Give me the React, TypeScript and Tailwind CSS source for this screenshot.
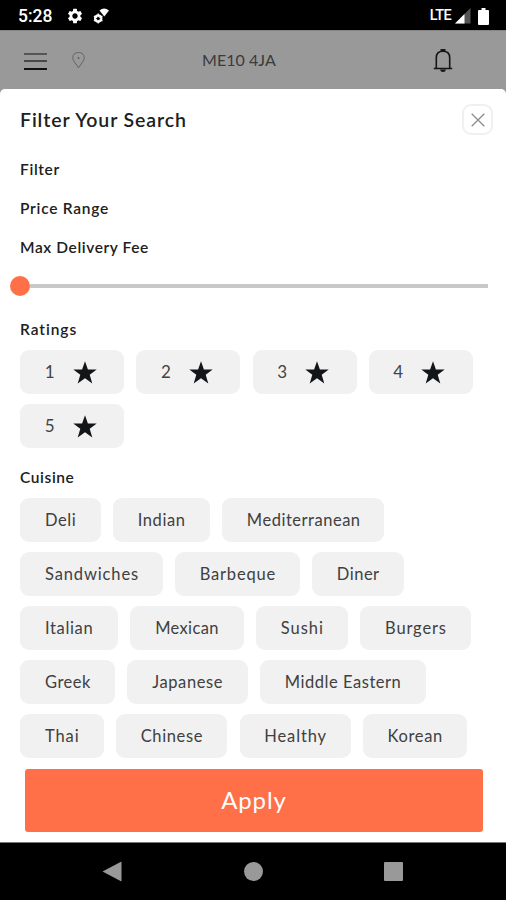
import { MdSettings } from "react-icons/md";

type Chip = { label: string; box: string };

const ratings = [1, 2, 3, 4, 5];

const cuisineRows: Chip[][] = [
  [
    { label: "Deli", box: "w-[80.5px] tracking-[0.6px]" },
    { label: "Indian", box: "w-[97px] tracking-[0.6px]" },
    { label: "Mediterranean", box: "w-[162px] tracking-[0.52px]" },
  ],
  [
    { label: "Sandwiches", box: "w-[142.5px] tracking-[0.87px]" },
    { label: "Barbeque", box: "w-[125px] tracking-[0.82px]" },
    { label: "Diner", box: "w-[91.5px] tracking-[0.5px]" },
  ],
  [
    { label: "Italian", box: "w-[98px] tracking-[0.65px]" },
    { label: "Mexican", box: "w-[113.5px] tracking-[0.35px]" },
    { label: "Sushi", box: "w-[92px] tracking-[0.95px]" },
    { label: "Burgers", box: "w-[111px] tracking-[0.85px]" },
  ],
  [
    { label: "Greek", box: "w-[95px] tracking-[0.5px]" },
    { label: "Japanese", box: "w-[120.5px] tracking-[0.62px]" },
    { label: "Middle Eastern", box: "w-[165.5px] tracking-[0.53px]" },
  ],
  [
    { label: "Thai", box: "w-[83.5px] tracking-[0.9px]" },
    { label: "Chinese", box: "w-[111.5px] tracking-[0.62px]" },
    { label: "Healthy", box: "w-[111px] tracking-[0.85px]" },
    { label: "Korean", box: "w-[104px] tracking-[0.65px]" },
  ],
];

function StatusBar() {
  return (
    <div className="flex h-[30px] items-center bg-black pt-[2px] pr-[16px] pl-[18px] text-white">
      <span className="w-[48px] font-[Roboto,sans-serif] text-[17.5px] leading-5 font-medium">5:28</span>
      <MdSettings className="size-[18px]" />
      <svg className="ml-[9px] h-[18px] w-[18px]" viewBox="0 0 18 18" fill="none">
        <circle cx="5.2" cy="11.5" r="3.2" stroke="white" strokeWidth="2.2" />
        <path d="M5.2 6.5v10M.9 9l8.6 5M9.5 9l-8.6 5" stroke="white" strokeWidth="1.3" />
        <circle cx="5.2" cy="11.5" r="1.6" fill="black" />
        <path d="M6.5 3.5q4.5-4 9.5 0l-4.7 6Z" fill="white" />
      </svg>
      <span className="ml-auto font-[Roboto,sans-serif] text-[14.5px] leading-5 font-medium tracking-[-0.6px]">LTE</span>
      <svg className="ml-[4px] h-[16px] w-[16px]" viewBox="0 0 16 16">
        <path d="M0 15.5 15.5 0v15.5Z" fill="#555" />
        <path d="M0 15.5 9.5 6v9.5Z" fill="white" />
      </svg>
      <svg className="mr-[1px] ml-[7px] h-[17px] w-[11px]" viewBox="0 0 11 18" preserveAspectRatio="none">
        <path d="M3.5 0h4v2H10q1 0 1 1v14q0 1-1 1H1q-1 0-1-1V3q0-1 1-1h2.5Z" fill="white" />
      </svg>
    </div>
  );
}

function AppHeader() {
  return (
    <header className="grid h-[59px] grid-cols-[23px_76px_1fr_62px] items-center border-t border-[#858585] bg-[#999] pl-[24px]">
      <div className="flex flex-col gap-[5.5px] pt-[2px]">
        <span className="h-[2px] bg-[#555]" />
        <span className="h-[2px] bg-[#484848]" />
        <span className="h-[2px] bg-[#111]" />
      </div>
      <svg className="ml-[25px] h-[17px] w-[13px]" viewBox="0 0 13 17" fill="none" stroke="#626262">
        <path d="M6.5 15.8 2.2 9.7C.1 6.4.6 3.8 2.1 2.2c2.4-2.3 6.4-2.3 8.8 0 1.5 1.6 2 4.2-.1 7.5Z" />
        <circle cx="6.5" cy="6" r="1" fill="#626262" stroke="none" />
      </svg>
      <span className="pl-[79px] text-[16px] leading-5 tracking-[0.05px] whitespace-nowrap text-[#3b3b3b]">ME10 4JA</span>
      <svg className="-ml-[11px] h-[25px] w-[20px]" viewBox="0 0 20 25" fill="none" stroke="#151515" strokeWidth="1.6">
        <path d="M3.3 20V9.7C3.3 5.4 6.2 3.2 10 3.2s6.7 2.2 6.7 6.5V20M.8 20.5h18.4M8.3 3V1.8h3.4V3" />
        <path d="M7 21.5h6q-.5 2.6-3 2.6t-3-2.6Z" fill="#151515" stroke="none" />
      </svg>
    </header>
  );
}

function Star() {
  return (
    <svg className="h-[23px] w-[24px]" viewBox="0 0 24 23">
      <path d="m12 .2 2.9 8.3H23.7l-7 5.2 2.6 8.7-7.3-5.1-7.3 5.1 2.6-8.7-7-5.2h8.8Z" fill="#131619" />
    </svg>
  );
}

function Heading({ text, spacing }: { text: string; spacing: string }) {
  return <h2 className={`text-[15.5px] leading-5 font-semibold text-[#202020] ${spacing}`}>{text}</h2>;
}

export default function App() {
  return (
    <div className="flex h-[900px] w-[506px] flex-col overflow-hidden bg-[#999] font-[Lato,'Open_Sans',sans-serif]">
      <StatusBar />
      <AppHeader />
      <main className="h-[753px] rounded-t-[5px] bg-white px-[20px]">
        <div className="flex h-[61px] items-center justify-between">
          <h1 className="text-[19.5px] leading-6 font-semibold tracking-[0.9px] text-[#202020]">Filter Your Search</h1>
          <button className="-mr-[7px] flex size-[31px] items-center justify-center rounded-[9px] border-2 border-[#f0f0f0]">
            <svg className="size-[14px]" viewBox="0 0 14 14" stroke="#8c8c8c" strokeWidth="1.3">
              <path d="m.7.7 12.6 12.6M13.3.7.7 13.3" />
            </svg>
          </button>
        </div>
        <div className="flex flex-col gap-[19px] pt-[9px]">
          <Heading text="Filter" spacing="tracking-[0.65px]" />
          <Heading text="Price Range" spacing="tracking-[0.75px]" />
          <Heading text="Max Delivery Fee" spacing="tracking-[0.6px]" />
        </div>
        <div className="mt-[19px] -ml-[10px] flex h-[20px] w-[478px] items-center">
          <span className="size-[20px] rounded-full bg-[#ff7048]" />
          <span className="h-[4px] flex-1 bg-[#c8c8c8]" />
        </div>
        <div className="pt-[23px]">
          <Heading text="Ratings" spacing="tracking-[0.95px]" />
          <div className="flex flex-wrap gap-x-[12.2px] gap-y-[10px] pt-[11px] pl-[0.3px]">
            {ratings.map((rating) => (
              <button key={rating} className="flex h-[44px] w-[104px] items-center rounded-[9px] bg-[#f1f1f1] pl-[24.5px] text-[17px] text-[#444]">
                <span className="w-[28px] text-left">{rating}</span>
                <Star />
              </button>
            ))}
          </div>
        </div>
        <div className="pt-[19px]">
          <Heading text="Cuisine" spacing="tracking-[0.6px]" />
          <div className="flex flex-col gap-[10px] pt-[11px] pl-[0.3px]">
            {cuisineRows.map((row) => (
              <div key={row[0].label} className="flex gap-[12.2px]">
                {row.map((chip) => (
                  <button key={chip.label} className={`h-[44px] rounded-[9px] bg-[#f1f1f1] pl-[24.7px] text-left text-[16.5px] whitespace-nowrap text-[#404040] ${chip.box}`}>
                    {chip.label}
                  </button>
                ))}
              </div>
            ))}
          </div>
        </div>
        <button className="mt-[11px] ml-[5px] flex h-[63px] w-[458px] items-center justify-center rounded-[3px] bg-[#ff7048] pb-[2px] text-[24px] tracking-[0.9px] text-white">Apply</button>
      </main>
      <nav className="flex h-[58px] items-center border-t border-[#777] bg-black pl-[102px]">
        <svg className="h-[21px] w-[20px]" viewBox="0 0 20 21">
          <path d="M.5 10.5 19.5.5v20Z" fill="#999" />
        </svg>
        <span className="ml-[122px] size-[19px] rounded-full bg-[#999]" />
        <span className="ml-[121px] size-[19px] rounded-[1px] bg-[#999]" />
      </nav>
    </div>
  );
}
